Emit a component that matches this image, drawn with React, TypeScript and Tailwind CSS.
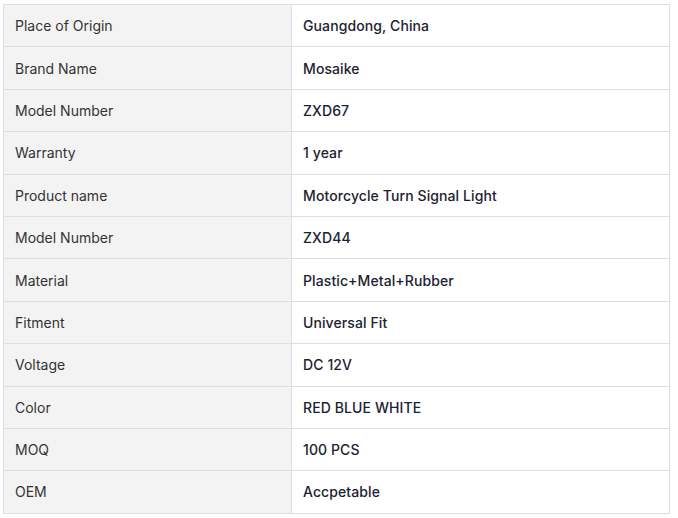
const rows: [string, string][] = [
  ["Place of Origin", "Guangdong, China"],
  ["Brand Name", "Mosaike"],
  ["Model Number", "ZXD67"],
  ["Warranty", "1 year"],
  ["Product name", "Motorcycle Turn Signal Light"],
  ["Model Number", "ZXD44"],
  ["Material", "Plastic+Metal+Rubber"],
  ["Fitment", "Universal Fit"],
  ["Voltage", "DC 12V"],
  ["Color", "RED BLUE WHITE"],
  ["MOQ", "100 PCS"],
  ["OEM", "Accpetable"],
];

export default function App() {
  return (
    <div className="bg-white min-h-screen pl-[3px] pt-[4px] font-['Inter',sans-serif] text-[14px]">
      <table className="w-[667px] border-collapse border border-[#dedede]">
        <tbody>
          {rows.map(([label, value], i) => (
            <tr key={i} className="h-[42.4px]">
              <td className="w-[288px] border border-[#dedede] bg-[#f3f3f3] px-[11px] text-[#333] align-middle">
                {label}
              </td>
              <td className="border border-[#dedede] px-[11px] text-[#1c2230] font-medium tracking-[0.1px] align-middle">
                {value}
              </td>
            </tr>
          ))}
        </tbody>
      </table>
    </div>
  );
}
